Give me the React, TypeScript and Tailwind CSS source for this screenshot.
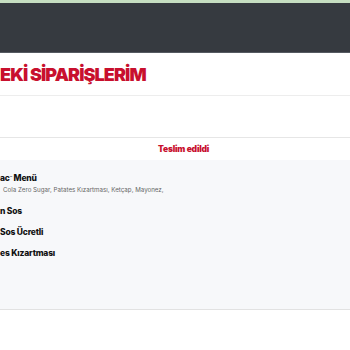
export default function App() {
  const font = { fontFamily: "Inter, 'Noto Sans', sans-serif" };
  return (
    <div className="w-[350px] h-[350px] bg-white overflow-hidden" style={font}>
      <div className="h-[3px] bg-[#c6dec1]" />
      <div className="h-[50px] bg-[#363a40] border-b border-[#555a61]" />
      <div className="pt-[10px] pb-[8px] border-b border-[#ededed]">
        <h1 className="text-[18px] leading-[24px] font-black text-[#c8102e] tracking-[-0.9px] whitespace-nowrap">
          EKİ SİPARİŞLERİM
        </h1>
      </div>
      <div className="h-[41px]" />
      <div className="border-t border-[#e6e6e6] h-[23px] flex items-center pl-[158px]">
        <span className="text-[8.5px] font-black text-[#c8102e] leading-none tracking-[-0.2px]">Teslim edildi</span>
      </div>
      <div className="bg-[#f7f8fa] border-b border-[#e2e2e2] h-[150px] pt-[11px] flex flex-col">
        <div className="flex flex-col">
          <span className="text-[8.5px] font-extrabold text-[#111] leading-[14px] whitespace-nowrap tracking-[-0.2px]">
            ac<sup className="text-[4px] font-normal">™</sup> Menü
          </span>
          <span className="text-[6.2px] text-[#666] leading-[9px] whitespace-nowrap pl-[3px]">
            Cola Zero Sugar, Patates Kızartması, Ketçap, Mayonez,
          </span>
        </div>
        <span className="mt-[10px] text-[8.5px] font-extrabold text-[#111] leading-[14px] whitespace-nowrap tracking-[-0.2px]">n Sos</span>
        <span className="mt-[7px] text-[8.5px] font-extrabold text-[#111] leading-[14px] whitespace-nowrap tracking-[-0.2px]">Sos Ücretli</span>
        <span className="mt-[7px] text-[8.5px] font-extrabold text-[#111] leading-[14px] whitespace-nowrap tracking-[-0.2px]">es Kızartması</span>
      </div>
    </div>
  );
}
